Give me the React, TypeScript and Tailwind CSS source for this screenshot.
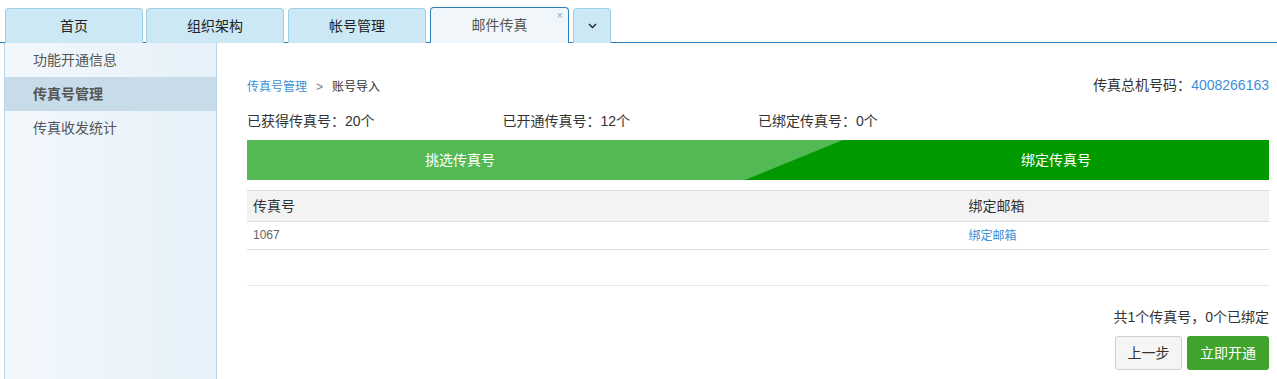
import React from "react";

const font = { fontFamily: '"Liberation Sans", "Noto Sans CJK SC", sans-serif' };

function Tab({ label, active, className }: { label: string; active?: boolean; className: string }) {
  return (
    <div
      className={
        "relative flex h-[35px] items-center justify-center rounded-t-[4px] border border-b-0 text-[14px] " +
        (active
          ? "z-10 h-[36px] border-[#2e80ba] bg-[#f0f6fa] text-[#555]"
          : "border-[#9fcfe6] bg-[#cce8f5] text-[#222]") +
        " " +
        className
      }
    >
      {label}
      {active && (
        <span className="absolute right-[5px] top-[2px] text-[11px] leading-none text-[#7fb3d9]">×</span>
      )}
    </div>
  );
}

export default function App() {
  return (
    <div className="flex h-screen min-h-[379px] flex-col bg-white" style={font}>
      {/* tab bar */}
      <div className="flex h-[43px] items-end border-b border-[#2e80ba] pl-[5px]">
        <div className="-mb-px flex items-end">
          <Tab label="首页" className="w-[138px]" />
          <Tab label="组织架构" className="ml-[3px] w-[138px]" />
          <Tab label="帐号管理" className="ml-[4px] w-[138px]" />
          <Tab label="邮件传真" active className="ml-[4px] w-[139px]" />
          <div className="ml-[4px] flex h-[35px] w-[38px] items-center justify-center rounded-t-[4px] border border-b-0 border-[#9fcfe6] bg-[#cce8f5]">
            <svg width="9" height="6" viewBox="0 0 9 6">
              <path d="M1 1 L4.5 4.5 L8 1" fill="none" stroke="#222" strokeWidth="1.4" />
            </svg>
          </div>
        </div>
      </div>

      <div className="flex flex-1">
        {/* sidebar */}
        <div className="ml-[4px] w-[213px] border-x border-[#b7d6ec] bg-gradient-to-r from-[#f3f8fc] to-[#e6f1f9] text-[14px] text-[#555]">
          <div className="flex h-[34px] items-center pl-[28px]">功能开通信息</div>
          <div className="flex h-[34px] items-center bg-[#c7dce8] pl-[28px] font-bold">传真号管理</div>
          <div className="flex h-[34px] items-center pl-[28px]">传真收发统计</div>
        </div>

        {/* main */}
        <div className="flex-1 pl-[30px] pr-[8px] pt-[31px]">
          <div className="flex h-[22px] items-center justify-between">
            <div className="flex items-center pt-[4px] text-[12px]">
              <span className="text-[#3d8fd6]">传真号管理</span>
              <span className="mx-[9px] text-[#777]">&gt;</span>
              <span className="text-[#333]">账号导入</span>
            </div>
            <div className="text-[14px] text-[#333]">
              传真总机号码：<span className="text-[#3d8fd6]">4008266163</span>
            </div>
          </div>

          <div className="mt-[15px] grid h-[20px] grid-cols-4 items-center text-[14px] text-[#333]">
            <div>已获得传真号：20个</div>
            <div>已开通传真号：12个</div>
            <div>已绑定传真号：0个</div>
            <div></div>
          </div>

          <div className="mt-[9px] flex h-[40px] text-[14px] text-white">
            <div className="flex w-[426px] items-center justify-center bg-[#52b954]">挑选传真号</div>
            <div className="relative flex-1 bg-[#52b954]">
              <svg className="absolute inset-0 h-full w-full" viewBox="0 0 170 40" preserveAspectRatio="none">
                <polygon points="72,40 170,0 170,40" fill="#009900" />
              </svg>
            </div>
            <div className="flex w-[426px] items-center justify-center bg-[#009900]">绑定传真号</div>
          </div>

          <table className="mt-[10px] w-full border-collapse">
            <thead>
              <tr className="h-[31px] border-y border-[#dcdcdc] bg-[#f3f3f3] text-left text-[14px] text-[#333]">
                <th className="w-[70%] px-[6px] font-normal">传真号</th>
                <th className="px-[6px] font-normal">绑定邮箱</th>
              </tr>
            </thead>
            <tbody>
              <tr className="h-[28px] border-b border-[#dcdcdc] text-[12px]">
                <td className="px-[6px] pb-[2px] text-[#666]">1067</td>
                <td className="px-[6px] text-[#3d8fd6]">绑定邮箱</td>
              </tr>
              <tr className="h-[36px] border-b border-[#e6e6e6]">
                <td></td>
                <td></td>
              </tr>
            </tbody>
          </table>

          <div className="mt-[21px] text-right text-[14px] leading-[20px] text-[#333]">共1个传真号，0个已绑定</div>

          <div className="mt-[9px] flex justify-end gap-[5px]">
            <button className="h-[34px] w-[67px] rounded-[3px] border border-[#cfcfcf] bg-[#f5f5f5] text-[14px] text-[#333]">
              上一步
            </button>
            <button className="h-[34px] w-[82px] rounded-[3px] bg-[#3fa32c] text-[14px] text-white">立即开通</button>
          </div>
        </div>
      </div>
    </div>
  );
}
